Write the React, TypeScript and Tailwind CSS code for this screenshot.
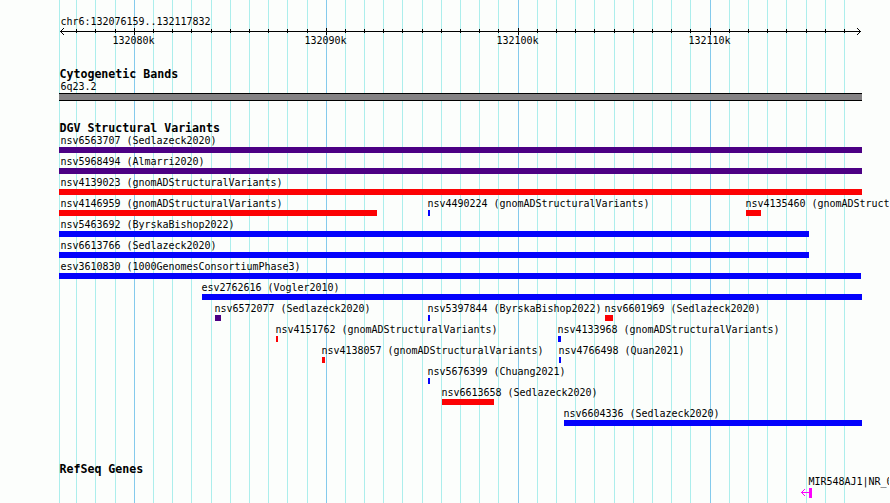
type Feature = { name: string; start: number; width: number; shift?: number; color: string };
type Row = { items: Feature[] };

const INDIGO = "bg-[#4c0084]";
const RED = "bg-[#fc0204]";
const BLUE = "bg-[#0402fc]";

const gridX = [
  59, 76, 95, 115, 134, 153, 172, 191, 211, 230, 249, 268, 287, 307, 326, 345, 364, 383, 402, 422, 441,
  460, 479, 498, 518, 537, 556, 575, 594, 614, 633, 652, 671, 690, 710, 729, 748, 767, 786, 806, 825, 844,
];
const majors = [134, 326, 518, 710];
const scale = [
  { x: 112.4, text: "132080k" },
  { x: 304.4, text: "132090k" },
  { x: 496.4, text: "132100k" },
  { x: 688.4, text: "132110k" },
];

const rows: Row[] = [
  { items: [{ name: "nsv6563707 (Sedlazeck2020)", start: 59, width: 803, shift: 1.4, color: INDIGO }] },
  { items: [{ name: "nsv5968494 (Almarri2020)", start: 59, width: 803, shift: 1.4, color: INDIGO }] },
  { items: [{ name: "nsv4139023 (gnomADStructuralVariants)", start: 59, width: 803, shift: 1.4, color: RED }] },
  {
    items: [
      { name: "nsv4146959 (gnomADStructuralVariants)", start: 59, width: 318, shift: 1.4, color: RED },
      { name: "nsv4490224 (gnomADStructuralVariants)", start: 428, width: 2, color: BLUE },
      { name: "nsv4135460 (gnomADStructuralVariants)", start: 746, width: 15, color: RED },
    ],
  },
  { items: [{ name: "nsv5463692 (ByrskaBishop2022)", start: 59, width: 750, shift: 1.4, color: BLUE }] },
  { items: [{ name: "nsv6613766 (Sedlazeck2020)", start: 59, width: 750, shift: 1.4, color: BLUE }] },
  { items: [{ name: "esv3610830 (1000GenomesConsortiumPhase3)", start: 59, width: 802, shift: 1.4, color: BLUE }] },
  { items: [{ name: "esv2762616 (Vogler2010)", start: 202, width: 660, color: BLUE }] },
  {
    items: [
      { name: "nsv6572077 (Sedlazeck2020)", start: 215, width: 6, color: INDIGO },
      { name: "nsv5397844 (ByrskaBishop2022)", start: 428, width: 2, color: BLUE },
      { name: "nsv6601969 (Sedlazeck2020)", start: 605, width: 8, color: RED },
    ],
  },
  {
    items: [
      { name: "nsv4151762 (gnomADStructuralVariants)", start: 276, width: 2, color: RED },
      { name: "nsv4133968 (gnomADStructuralVariants)", start: 558, width: 3, color: BLUE },
    ],
  },
  {
    items: [
      { name: "nsv4138057 (gnomADStructuralVariants)", start: 322, width: 3, color: RED },
      { name: "nsv4766498 (Quan2021)", start: 559, width: 2, color: BLUE },
    ],
  },
  { items: [{ name: "nsv5676399 (Chuang2021)", start: 428, width: 2, color: BLUE }] },
  { items: [{ name: "nsv6613658 (Sedlazeck2020)", start: 442, width: 52, color: RED }] },
  { items: [{ name: "nsv6604336 (Sedlazeck2020)", start: 564, width: 298, color: BLUE }] },
];

function Gridlines() {
  return (
    <div className="absolute inset-0 flex">
      {gridX.map((x, i) => (
        <div
          key={x}
          className={`w-px shrink-0 ${majors.includes(x) ? "bg-[#84caec]" : "bg-[#aceeec]"}`}
          style={{ marginLeft: i === 0 ? x : x - gridX[i - 1] - 1 }}
        />
      ))}
    </div>
  );
}

function Ruler() {
  return (
    <svg className="block h-[7px] w-[890px]" viewBox="0 0 890 7" shapeRendering="crispEdges" fill="#000">
      <rect x="60" y="3" width="801" height="1" />
      {gridX.slice(1).map((x) =>
        majors.includes(x) ? (
          <rect key={x} x={x} y="0" width="1" height="7" />
        ) : (
          <rect key={x} x={x} y="1" width="1" height="4" />
        ),
      )}
      {[1, 2, 3].map((d) => (
        <g key={d}>
          <rect x={60 + d} y={3 - d} width="1" height="1" />
          <rect x={60 + d} y={3 + d} width="1" height="1" />
          <rect x={860 - d} y={3 - d} width="1" height="1" />
          <rect x={860 - d} y={3 + d} width="1" height="1" />
        </g>
      ))}
    </svg>
  );
}

function Heading({ children }: { children: string }) {
  return <h2 className="ml-[59.5px] h-[14px] text-[11.63px] leading-[14px] font-bold">{children}</h2>;
}

function TrackRow({ items }: Row) {
  return (
    <div className="flex h-[21px]">
      {items.map((f, i) => (
        <div
          key={f.name}
          className="w-0 shrink-0"
          style={{ marginLeft: i === 0 ? f.start : f.start - items[i - 1].start }}
        >
          <div className="h-3" style={{ marginLeft: f.shift ?? -0.5 }}>
            {f.name}
          </div>
          <div className={`h-[6px] ${f.color}`} style={{ width: f.width }} />
        </div>
      ))}
    </div>
  );
}

export default function App() {
  return (
    <main className="relative h-[503px] w-[890px] bg-[#fcfefc] pr-px">
      <Gridlines />
      <div className="relative flex h-[503px] w-[889px] flex-col overflow-hidden pt-4 font-['DejaVu_Sans_Mono',monospace] text-[10px] leading-[12px] tracking-[-0.02px] whitespace-nowrap text-black">
        <div className="ml-[60.4px] h-3">chr6:132076159..132117832</div>
        <Ruler />
        <div className="flex h-3">
          {scale.map((s, i) => (
            <span
              key={s.text}
              className="w-0 shrink-0"
              style={{ marginLeft: i === 0 ? s.x : s.x - scale[i - 1].x }}
            >
              {s.text}
            </span>
          ))}
        </div>
        <section className="pt-5">
          <Heading>Cytogenetic Bands</Heading>
          <div className="ml-[60.4px] h-3">6q23.2</div>
          <div className="ml-[59px] h-2 w-[803px] border-y border-black bg-[#848284]" />
        </section>
        <section className="pt-5">
          <Heading>DGV Structural Variants</Heading>
          {rows.map((r) => (
            <TrackRow key={r.items[0].name} items={r.items} />
          ))}
        </section>
        <section className="pt-[33px]">
          <Heading>RefSeq Genes</Heading>
          <div className="ml-[808.5px] h-3">MIR548AJ1|NR_039611.1</div>
          <svg className="ml-[801px] block h-[10px] w-[11px]" viewBox="0 0 11 10" shapeRendering="crispEdges" fill="#fc02fc">
            <rect x="8" y="0" width="3" height="10" />
            <rect x="0" y="4" width="8" height="1" />
            {[1, 2, 3].map((d) => (
              <g key={d}>
                <rect x={d} y={4 - d} width="1" height="1" />
                <rect x={d} y={4 + d} width="1" height="1" />
              </g>
            ))}
          </svg>
        </section>
      </div>
    </main>
  );
}
